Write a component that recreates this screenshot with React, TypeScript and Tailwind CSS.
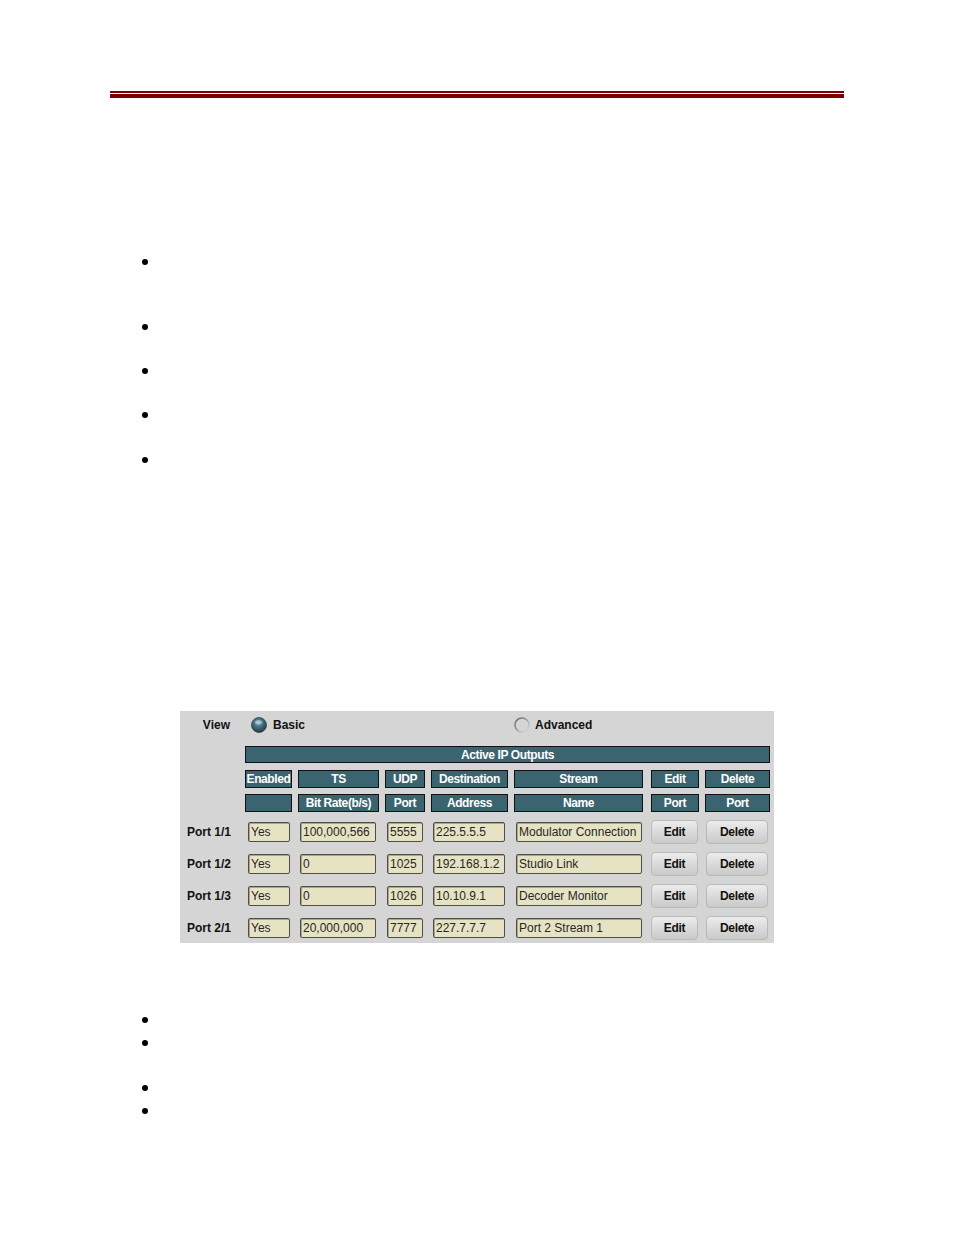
import React from "react";

const font = { fontFamily: '"Liberation Sans", Arial, sans-serif' };

function RadioOn() {
  return (
    <svg width="16" height="16" viewBox="0 0 16 16">
      <defs>
        <radialGradient id="ron" cx="45%" cy="35%" r="65%">
          <stop offset="0%" stopColor="#9fc3cf" />
          <stop offset="35%" stopColor="#4f7c8a" />
          <stop offset="100%" stopColor="#1d3a44" />
        </radialGradient>
      </defs>
      <circle cx="8" cy="8" r="7.5" fill="url(#ron)" stroke="#2c4650" strokeWidth="0.8" />
      <ellipse cx="7.6" cy="5.2" rx="3.6" ry="2" fill="#c9dde3" opacity="0.55" />
    </svg>
  );
}

function RadioOff() {
  return (
    <svg width="16" height="16" viewBox="0 0 16 16">
      <defs>
        <linearGradient id="roff" x1="0" y1="0" x2="1" y2="1">
          <stop offset="0%" stopColor="#5e5e5e" />
          <stop offset="100%" stopColor="#e2e2e2" />
        </linearGradient>
      </defs>
      <circle cx="8" cy="8" r="7" fill="#d5d5d5" stroke="url(#roff)" strokeWidth="1.6" />
    </svg>
  );
}

function Head({ children }: { children?: React.ReactNode }) {
  return (
    <div className="h-[18px] bg-[#3b6471] border border-[#111] text-white font-bold text-[12px] leading-[17px] text-center tracking-[-0.4px] whitespace-nowrap overflow-hidden">
      {children}
    </div>
  );
}

function Field({ children, cls = "" }: { children: React.ReactNode; cls?: string }) {
  return (
    <div
      className={`h-[20px] bg-[#e6e3c4] border border-[#4e4e46] rounded-[2px] shadow-[inset_1px_1px_0_#a8a692] text-[12px] leading-[18px] text-[#262626] pl-[2px] whitespace-nowrap overflow-hidden ${cls}`}
    >
      {children}
    </div>
  );
}

function Btn({ children, cls = "" }: { children: React.ReactNode; cls?: string }) {
  return (
    <div
      className={`h-[24px] rounded-[4px] border border-[#b9b9b9] bg-gradient-to-b from-[#ececec] to-[#c9c9c9] text-[12px] leading-[22px] font-bold text-[#111] text-center tracking-[-0.3px] ${cls}`}
    >
      {children}
    </div>
  );
}

const rows = [
  ["Port 1/1", "Yes", "100,000,566", "5555", "225.5.5.5", "Modulator Connection"],
  ["Port 1/2", "Yes", "0", "1025", "192.168.1.2", "Studio Link"],
  ["Port 1/3", "Yes", "0", "1026", "10.10.9.1", "Decoder Monitor"],
  ["Port 2/1", "Yes", "20,000,000", "7777", "227.7.7.7", "Port 2 Stream 1"],
];

const grid = "grid grid-cols-[47px_81px_40px_77px_131px_48px_65px] gap-x-[6px]";

function Dot({ mt }: { mt: string }) {
  return <li className={`w-[6px] h-[6px] rounded-full bg-black ml-[142px] ${mt}`} />;
}

export default function App() {
  return (
    <div className="w-[954px] h-[1235px] bg-white overflow-hidden" style={font}>
      <div className="pt-[91px] pl-[110px]">
        <div className="w-[734px] h-[2px] bg-[#800000]" />
        <div className="w-[734px] h-[4px] mt-[1px] bg-[#800000]" />
      </div>

      <ul className="flex flex-col">
        <Dot mt="mt-[161px]" />
        <Dot mt="mt-[59px]" />
        <Dot mt="mt-[38px]" />
        <Dot mt="mt-[38px]" />
        <Dot mt="mt-[39px]" />
      </ul>

      <div className="mt-[248px] ml-[180px] w-[594px] h-[232px] bg-[#d5d5d5] flex flex-col">
        <div className="h-[28px] flex items-center">
          <div className="w-[65px] pr-[15px] text-right text-[12px] font-bold text-[#111]">View</div>
          <div className="w-[269px] flex items-center pl-[6px] gap-[6px]">
            <RadioOn />
            <span className="text-[12px] font-bold text-[#111]">Basic</span>
          </div>
          <div className="flex items-center gap-[5px]">
            <RadioOff />
            <span className="text-[12px] font-bold text-[#111]">Advanced</span>
          </div>
        </div>

        <div className="ml-[65px] w-[525px] flex flex-col">
          <div className="mt-[7px] h-[17px] bg-[#3b6471] border border-[#111] text-white font-bold text-[12px] leading-[16px] text-center tracking-[-0.4px]">
            Active IP Outputs
          </div>
          <div className={`${grid} mt-[7px]`}>
            <Head>Enabled</Head>
            <Head>TS</Head>
            <Head>UDP</Head>
            <Head>Destination</Head>
            <div className="w-[129px]"><Head>Stream</Head></div>
            <Head>Edit</Head>
            <Head>Delete</Head>
          </div>
          <div className={`${grid} mt-[6px]`}>
            <Head />
            <Head>Bit Rate(b/s)</Head>
            <Head>Port</Head>
            <Head>Address</Head>
            <div className="w-[129px]"><Head>Name</Head></div>
            <Head>Port</Head>
            <Head>Port</Head>
          </div>
        </div>

        <div className="flex flex-col gap-[8px] mt-[8px]">
          {rows.map((r) => (
            <div key={r[0]} className="flex items-center h-[24px]">
              <div className="w-[65px] pr-[14px] text-right text-[12px] font-bold text-[#111] whitespace-nowrap">
                {r[0]}
              </div>
              <div className={`${grid} w-[525px] items-center`}>
                <Field cls="ml-[3px] mr-[2px]">{r[1]}</Field>
                <Field cls="ml-[2px] mr-[3px]">{r[2]}</Field>
                <Field cls="ml-[2px] mr-[2px]">{r[3]}</Field>
                <Field cls="ml-[2px] mr-[3px]">{r[4]}</Field>
                <Field cls="ml-[2px] mr-[3px]">{r[5]}</Field>
                <Btn cls="mr-[1px]">Edit</Btn>
                <Btn cls="ml-[1px] mr-[2px]">Delete</Btn>
              </div>
            </div>
          ))}
        </div>
      </div>

      <ul className="flex flex-col">
        <Dot mt="mt-[74px]" />
        <Dot mt="mt-[17px]" />
        <Dot mt="mt-[39px]" />
        <Dot mt="mt-[17px]" />
      </ul>
    </div>
  );
}
